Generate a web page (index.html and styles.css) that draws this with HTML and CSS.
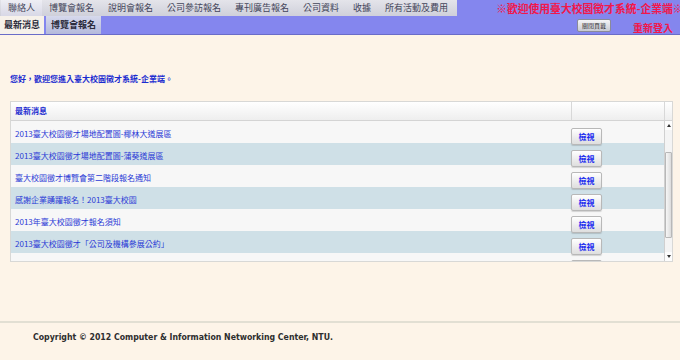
FILE: index.html
```html
<!DOCTYPE html>
<html lang="zh-Hant">
<head>
    <meta charset="UTF-8">
    <meta name="viewport" content="width=device-width, initial-scale=1.0">
    <title>臺大校園徵才系統-企業端</title>
    <link rel="stylesheet" href="styles.css">
</head>
<body>
    <div class="header">
        <div class="menu-row">
            <ul class="menu">
                <li class="active">聯絡人</li>
                <li>博覽會報名</li>
                <li>說明會報名</li>
                <li>公司參訪報名</li>
                <li>專刊廣告報名</li>
                <li>公司資料</li>
                <li>收據</li>
                <li>所有活動及費用</li>
            </ul>
            <div class="welcome">※歡迎使用臺大校園徵才系統-企業端※</div>
        </div>
        <div class="tab-row">
            <div class="tab current">最新消息</div>
            <div class="tab">博覽會報名</div>
            <div class="tab-tools">
                <button class="close-tab">關閉頁籤</button>
                <a class="relogin" href="#">重新登入</a>
            </div>
        </div>
    </div>

    <div class="main">
        <p class="greeting">您好，歡迎您進入臺大校園徵才系統-企業端。</p>

        <div class="news-panel">
            <div class="news-head">
                <div class="head-title">最新消息</div>
                <div class="head-cell"></div>
                <div class="head-cell"></div>
            </div>
            <div class="news-body">
                <div class="news-list" id="newsList"></div>
                <div class="scrollbar">
                    <div class="arrow up"></div>
                    <div class="track"><div class="thumb"></div></div>
                    <div class="arrow down"></div>
                </div>
            </div>
        </div>
    </div>

    <div class="footer">
        Copyright © 2012 Computer &amp; Information Networking Center, NTU.
    </div>

    <script>
        const news = [
            '2013臺大校園徵才場地配置圖-椰林大道展區',
            '2013臺大校園徵才場地配置圖-蒲葵道展區',
            '臺大校園徵才博覽會第二階段報名通知',
            '感謝企業踴躍報名！2013臺大校園',
            '2013年臺大校園徵才報名須知',
            '2013臺大校園徵才「公司及機構參展公約」',
            '2013臺大校園徵才企業參展名單'
        ];

        const list = document.getElementById('newsList');
        news.forEach((title, index) => {
            const row = document.createElement('div');
            row.className = index % 2 ? 'news-row alt' : 'news-row';
            row.innerHTML = `
                <a class="news-title" href="#">${title}</a>
                <div class="news-action"><button class="view">檢視</button></div>
            `;
            list.appendChild(row);
        });
    </script>
</body>
</html>
```

FILE: styles.css
```css
body {
    margin: 0;
    background-color: #fdf4e8;
    font-family: "Noto Sans CJK TC", "Liberation Sans", sans-serif;
    height: 360px;
    overflow: hidden;
}

.header {
    background-color: #8486ee;
    border-bottom: 1px solid #6a6cc8;
}

.menu-row {
    display: flex;
    height: 16px;
    align-items: stretch;
    overflow: hidden;
}

.menu {
    display: flex;
    flex: none;
    margin: 0;
    padding: 0 2px 0 1px;
    list-style: none;
    background: linear-gradient(#e4e4ea, #cfd0da);
}

.menu li {
    flex: none;
    padding: 0 7px;
    font-size: 9px;
    line-height: 16px;
    color: #44465a;
    white-space: nowrap;
}

.menu li.active {
    background: linear-gradient(#eeeef4, #d8d8e6);
}

.welcome {
    margin-left: 39px;
    color: #f2174a;
    font-size: 10.8px;
    font-weight: bold;
    line-height: 16px;
    white-space: nowrap;
}

.tab-row {
    display: flex;
    height: 18px;
    align-items: stretch;
}

.tab {
    font-size: 9px;
    font-weight: bold;
    line-height: 18px;
    color: #2a2a3a;
    padding: 0 5px;
    white-space: nowrap;
    background: linear-gradient(#d6d9ec, #b4b9dc);
}

.tab.current {
    background: #f6f1ea;
    padding: 0 4px;
    margin-right: 2px;
}

.tab-tools {
    display: flex;
    align-items: center;
    margin-left: auto;
}

.close-tab {
    width: 34px;
    height: 13px;
    padding: 0;
    margin-right: 22px;
    font-family: inherit;
    font-size: 6px;
    line-height: 11px;
    color: #333;
    border: 1px solid #8a8a9a;
    border-radius: 2px;
    background: linear-gradient(#f4f4f6, #c8cad2);
}

.relogin {
    color: #f2174a;
    font-size: 10px;
    font-weight: bold;
    text-decoration: none;
    margin-right: 7px;
    margin-top: 4px;
}

.main {
    padding: 39px 7px 0 10px;
}

.greeting {
    margin: 0 0 17px;
    color: #1a2bd0;
    font-size: 8px;
    font-weight: bold;
    line-height: 10px;
}

.news-panel {
    width: 663px;
    border: 1px solid #d8d8d6;
    box-sizing: border-box;
    background: #fafafa;
}

.news-head {
    display: grid;
    grid-template-columns: 1fr 93px 8px;
    height: 18px;
    background: linear-gradient(#ffffff, #eeeeee);
    border-bottom: 1px solid #d4d4d4;
}

.head-title {
    padding-left: 4px;
    font-size: 8px;
    font-weight: bold;
    line-height: 18px;
    color: #1a2bd0;
}

.head-cell {
    border-left: 1px solid #d8d8d8;
}

.news-body {
    display: grid;
    grid-template-columns: 1fr 8px;
    height: 140px;
}

.news-list {
    overflow: hidden;
}

.news-row {
    display: grid;
    grid-template-columns: 1fr 93px;
    height: 22px;
    align-items: center;
    background-color: #f7f7f7;
}

.news-row.alt {
    background-color: #cfe0e7;
}

.news-title {
    padding-left: 4px;
    font-size: 8px;
    color: #2a3ad6;
    text-decoration: none;
    white-space: nowrap;
}

.view {
    width: 31px;
    height: 17px;
    padding: 0;
    font-family: inherit;
    font-size: 8px;
    font-weight: bold;
    color: #1a2bf0;
    border: 1px solid #b8b8b8;
    border-radius: 2px;
    background: linear-gradient(#ffffff, #dedede);
    box-shadow: 0 1px 1px rgba(0, 0, 0, 0.15);
}

.scrollbar {
    display: flex;
    flex-direction: column;
    border-left: 1px solid #d0d0d0;
    background: #f4f4f4;
}

.arrow {
    height: 9px;
    position: relative;
    background: #fdfdfd;
}

.arrow::after {
    content: "";
    position: absolute;
    left: 2px;
    top: 3px;
    border-left: 2px solid transparent;
    border-right: 2px solid transparent;
}

.arrow.up::after {
    border-bottom: 3px solid #333;
}

.arrow.down::after {
    border-top: 3px solid #333;
}

.track {
    flex: 1;
    padding-top: 22px;
}

.thumb {
    height: 84px;
    border: 1px solid #b8b8b8;
    border-radius: 1px;
    background: linear-gradient(90deg, #f6f6f6, #dcdcdc);
}

.footer {
    margin-top: 59px;
    border-top: 2px solid #e2dfd3;
    padding: 8px 0 0 33px;
    font-family: "DejaVu Sans Condensed", "DejaVu Sans", sans-serif;
    font-stretch: condensed;
    font-size: 8.7px;
    line-height: 12px;
    color: #2e2e2e;
    font-weight: bold;
}
```
